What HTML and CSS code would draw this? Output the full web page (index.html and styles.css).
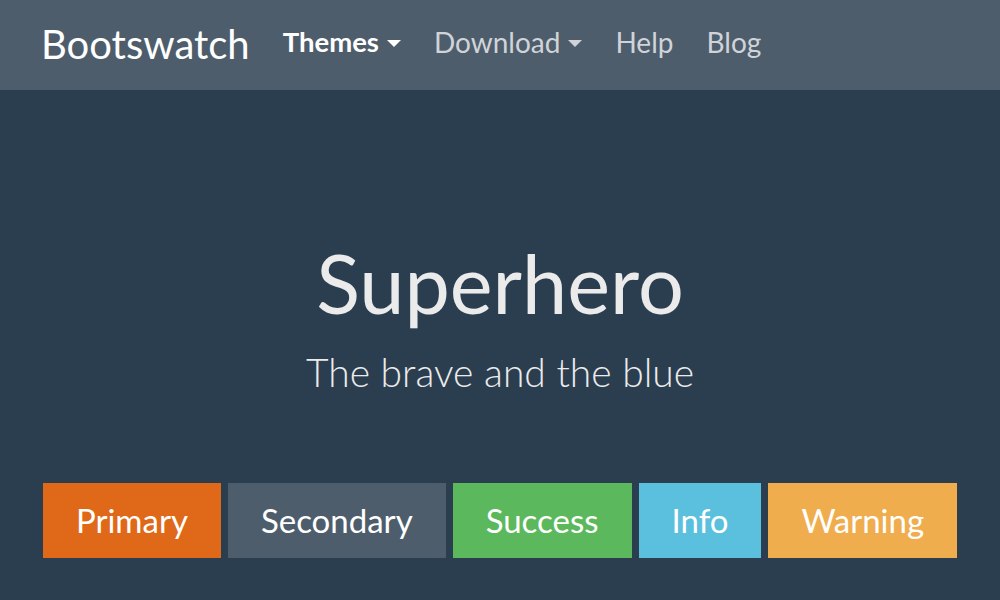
FILE: index.html
```html
<!DOCTYPE html>
<html>
<head>
<meta charset="utf-8">
<link rel="stylesheet" href="styles.css">
</head>
<body>
<nav class="navbar">
  <a class="brand">Bootswatch</a>
  <ul class="nav">
    <li class="nav-item active">Themes <span class="caret"></span></li>
    <li class="nav-item">Download <span class="caret"></span></li>
    <li class="nav-item">Help</li>
    <li class="nav-item">Blog</li>
  </ul>
</nav>
<main class="hero">
  <h1 class="title">Superhero</h1>
  <p class="lead">The brave and the blue</p>
  <div class="buttons">
    <span class="btn btn-primary">Primary</span>
    <span class="btn btn-secondary">Secondary</span>
    <span class="btn btn-success">Success</span>
    <span class="btn btn-info">Info</span>
    <span class="btn btn-warning">Warning</span>
  </div>
</main>
</body>
</html>
```
FILE: styles.css
```css
* { box-sizing: border-box; }
html, body {
  margin: 0;
  padding: 0;
  height: 100%;
}
body {
  background: #2B3E50;
  color: #EBEBEB;
  font-family: Lato, "Open Sans", sans-serif;
  overflow: hidden;
}
.navbar {
  height: 90px;
  background: #4E5D6C;
  display: flex;
  align-items: center;
  padding: 0 0 0 41px;
}
.brand {
  color: #fff;
  font-size: 40px;
  font-weight: 400;
  margin-right: 33px;
  line-height: 1;
  padding-bottom: 2px;
}
.nav {
  list-style: none;
  margin: 0;
  padding: 0 0 7px;
  display: flex;
  gap: 33px;
}
.nav-item {
  font-size: 28px;
  color: #D0D4D8;
  display: flex;
  align-items: center;
  line-height: 1;
}
.nav-item.active {
  color: #fff;
  font-weight: 700;
  font-size: 27.5px;
}
.caret {
  display: inline-block;
  width: 0;
  height: 0;
  margin-left: 8px;
  margin-top: 4px;
  border-left: 7.5px solid transparent;
  border-right: 7.5px solid transparent;
  border-top: 7px solid currentColor;
}
.hero {
  display: flex;
  flex-direction: column;
  align-items: center;
}
.title {
  margin: 152px 0 0;
  font-size: 81px;
  font-weight: 400;
  line-height: 1;
  color: #EBEBEB;
}
.lead {
  margin: 30px 0 0;
  font-size: 39px;
  font-weight: 300;
  line-height: 1;
  color: #EBEBEB;
}
.buttons {
  margin-top: 91px;
  display: flex;
  gap: 7px;
}
.btn {
  height: 75px;
  display: flex;
  align-items: center;
  justify-content: center;
  padding: 0 33px;
  font-size: 33px;
  color: #fff;
  line-height: 1;
}
.btn-primary { background: #DF6919; }
.btn-secondary { background: #4E5D6C; }
.btn-success { background: #5CB85C; }
.btn-info { background: #5BC0DE; }
.btn-warning { background: #F0AD4E; }
```
